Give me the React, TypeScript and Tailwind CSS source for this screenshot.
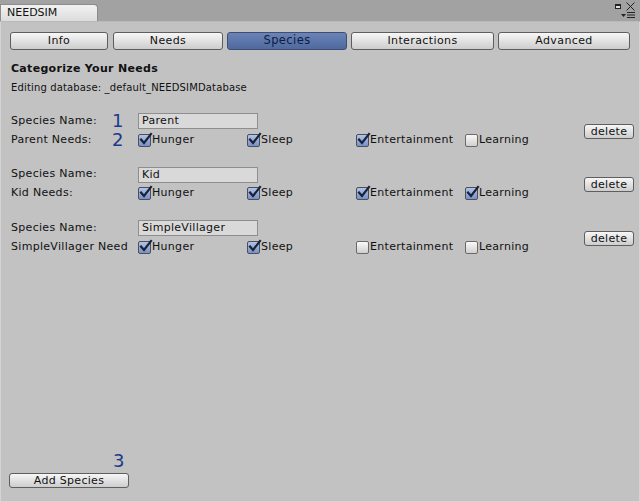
import React from 'react'

const font = { fontFamily: '"DejaVu Sans", Verdana, sans-serif' }

type Species = {
  name: string
  label: string
  needs: boolean[]
  marks?: [string, string]
}

const needNames = ['Hunger', 'Sleep', 'Entertainment', 'Learning']

const species: Species[] = [
  { name: 'Parent', label: 'Parent Needs:', needs: [true, true, true, false], marks: ['1', '2'] },
  { name: 'Kid', label: 'Kid Needs:', needs: [true, true, true, true] },
  { name: 'SimpleVillager', label: 'SimpleVillager Need', needs: [true, true, false, false] },
]

const tabs = [
  { label: 'Info', w: 'w-[98px]', ml: 'ml-0' },
  { label: 'Needs', w: 'w-[110px]', ml: 'ml-[5px]' },
  { label: 'Species', w: 'w-[120px]', ml: 'ml-[4px]', active: true },
  { label: 'Interactions', w: 'w-[143px]', ml: 'ml-[4px]' },
  { label: 'Advanced', w: 'w-[132px]', ml: 'ml-[4px]' },
]

function Checkbox({ checked }: { checked: boolean }) {
  return (
    <span className="relative inline-block w-[13px] h-[13px] shrink-0">
      <span
        className={
          checked
            ? 'absolute inset-0 rounded-[2px] border border-[#4a4f5c] bg-gradient-to-b from-[#b3c3e4] to-[#7891c6]'
            : 'absolute inset-0 rounded-[2px] border border-[#6a6a6a] bg-gradient-to-b from-[#fafafa] to-[#cfcfcf]'
        }
      />
      {checked && (
        <svg className="absolute left-[1px] -top-[2px]" width="14" height="14" viewBox="0 0 14 14">
          <path d="M2 7.5 L5 11 L12 2" fill="none" stroke="#18223d" strokeWidth="2.2" strokeLinecap="square" />
        </svg>
      )}
    </span>
  )
}

function Button({ children, className = '' }: { children: React.ReactNode; className?: string }) {
  return (
    <div
      className={`flex items-center justify-center rounded-[3px] border border-[#5e5e5e] bg-gradient-to-b from-[#f7f7f7] to-[#cdcdcd] text-[11px] text-[#111] tracking-[0.3px] ${className}`}
    >
      {children}
    </div>
  )
}

function Mark({ n }: { n?: string }) {
  return <div className="w-[26px] text-[18px] leading-[18px] text-[#1a3a8c]">{n}</div>
}

export default function App() {
  return (
    <div className="w-[640px] h-[502px] flex flex-col bg-[#c2c2c2] text-[#111] overflow-hidden" style={font}>
      {/* title bar */}
      <div className="relative h-[22px] bg-[#a2a2a2] border-b border-[#b9b9b9] flex items-end shrink-0">
        <div className="w-[98px] h-[17px] rounded-tr-[4px] border border-b-0 border-[#8c8c8c] bg-gradient-to-b from-[#f2f2f2] to-[#dcdcdc] pl-[6px] text-[11px] leading-[15px]">
          NEEDSIM
        </div>
        <div className="absolute right-[5px] top-[2px] flex flex-col items-end">
          <div className="flex items-center gap-[5px]">
            <span className="w-[6px] h-[5px] border border-[#222] border-t-2 bg-[#ddd]" />
            <svg width="9" height="9" viewBox="0 0 9 9">
              <path d="M0.5 0.5 L8.5 8.5 M8.5 0.5 L0.5 8.5" stroke="#222" strokeWidth="1" />
            </svg>
          </div>
          <div className="flex items-center gap-[1px] mt-[1px]">
            <svg width="5" height="3" viewBox="0 0 5 3">
              <path d="M0 0 H5 L2.5 3 Z" fill="#222" />
            </svg>
            <svg width="8" height="6" viewBox="0 0 8 6">
              <path d="M0 0.5 H8 M0 3 H8 M0 5.5 H8" stroke="#222" strokeWidth="1" />
            </svg>
          </div>
        </div>
      </div>

      <div className="flex-1 flex flex-col border-x border-b border-[#d4d4d4]">
        {/* toolbar */}
        <div className="flex pl-[9px] pt-[10px]">
          {tabs.map((t) =>
            t.active ? (
              <div
                key={t.label}
                className={`${t.w} ${t.ml} h-[18px] flex items-center justify-center rounded-[3px] border border-[#3c4e74] bg-gradient-to-b from-[#6b83b6] to-[#4f6aa0] text-[11.5px] tracking-[0.4px] text-[#0e1d44]`}
              >
                {t.label}
              </div>
            ) : (
              <Button key={t.label} className={`${t.w} ${t.ml} h-[18px] text-[11.5px] tracking-[0.4px]`}>
                {t.label}
              </Button>
            )
          )}
        </div>

        <div className="pl-[10px] mt-[11px] text-[11px] font-bold leading-[16px] tracking-[0.3px]">Categorize Your Needs</div>
        <div className="pl-[10px] mt-[4px] text-[10px] leading-[14px] tracking-[0.15px]">Editing database: _default_NEEDSIMDatabase</div>

        <div className="mt-[18px] flex flex-col gap-[17.5px]">
          {species.map((s) => (
            <div key={s.name} className="flex items-center pl-[10px] pr-[5px]">
              <div className="flex flex-col gap-[2px]">
                <div className="flex items-center h-[16px]">
                  <div className="w-[101px] text-[11px] tracking-[0.3px]">Species Name:</div>
                  <Mark n={s.marks?.[0]} />
                  <div className="w-[120px] h-[16px] border border-[#8e8e8e] bg-[#d9d9d9] pl-[3px] text-[11px] leading-[14px] tracking-[0.3px]">
                    {s.name}
                  </div>
                </div>
                <div className="flex items-center h-[18px]">
                  <div className="w-[101px] text-[11px] tracking-[0.3px] whitespace-nowrap">{s.label}</div>
                  <Mark n={s.marks?.[1]} />
                  {needNames.map((n, i) => (
                    <div key={n} className="w-[109px] flex items-center text-[11px] tracking-[0.3px]">
                      <Checkbox checked={s.needs[i]} />
                      <span className="ml-[1px]">{n}</span>
                    </div>
                  ))}
                </div>
              </div>
              <Button className="ml-auto w-[50px] h-[15px] leading-[13px]">delete</Button>
            </div>
          ))}
        </div>

        <div className="flex-1" />

        <div className="pl-[8px] pb-[13px]">
          <div className="pl-[104px] h-[18px] text-[18px] leading-[18px] text-[#1a3a8c]">3</div>
          <Button className="mt-[3px] w-[120px] h-[15px] leading-[13px]">Add Species</Button>
        </div>
      </div>
    </div>
  )
}
